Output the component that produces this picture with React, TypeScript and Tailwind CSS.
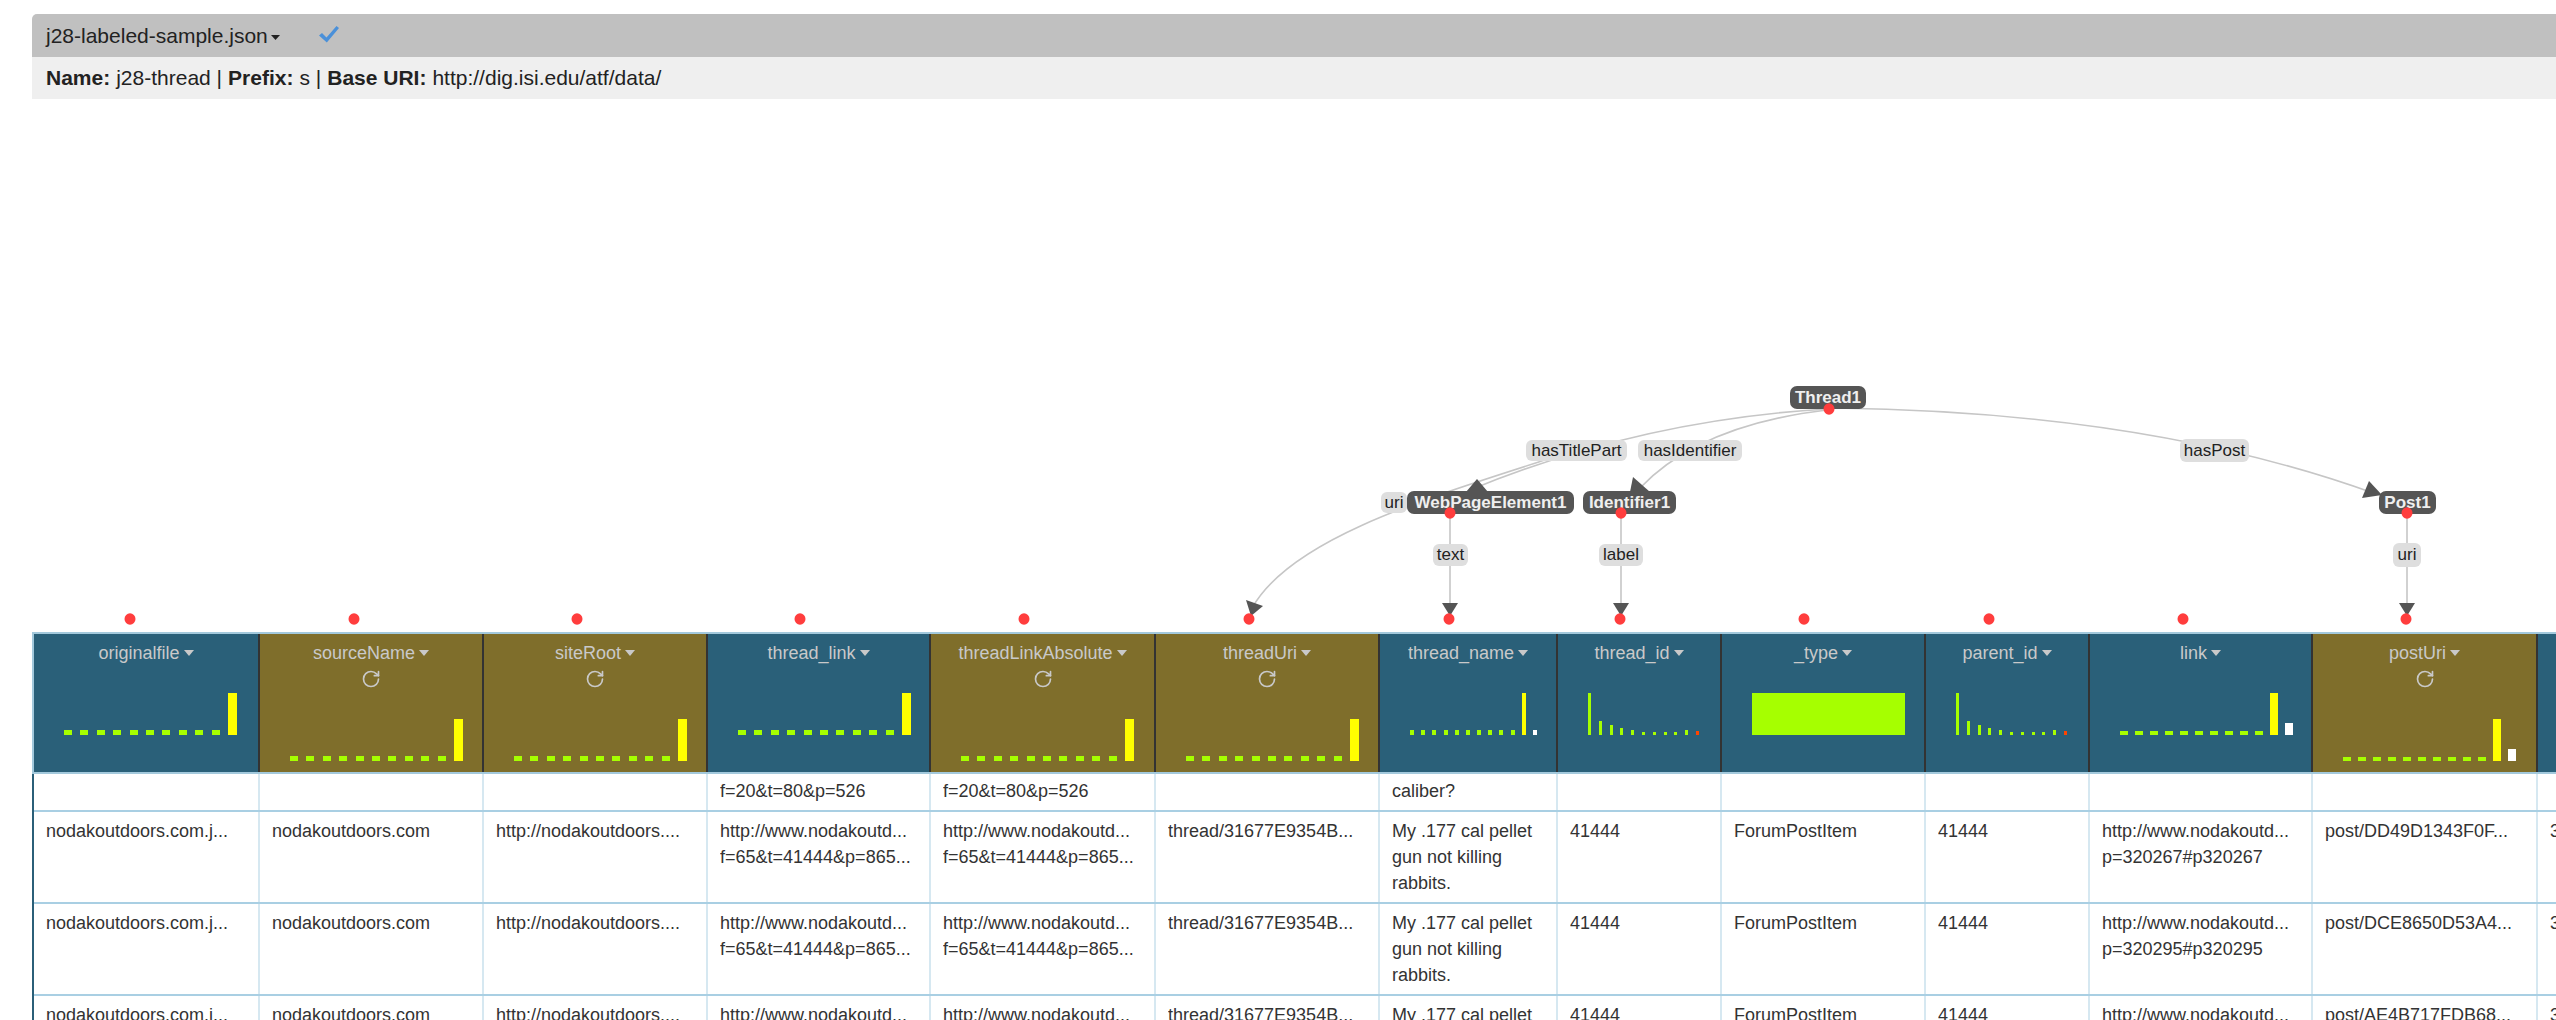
import React from 'react';
import { RotateCw } from 'lucide-react';

type Bar = { w: number; h: number; c: string };
const G = '#a6ff00';
const Y = '#ffff00';
const WH = '#ffffff';
const RD = '#ff4500';
const rep = (n: number, b: Bar): Bar[] => Array.from({ length: n }, () => b);

const CHARTS: Record<string, { cw: number; bars: Bar[] }> = {
  A: { cw: 173, bars: [...rep(10, { w: 8, h: 5, c: G }), { w: 9, h: 42, c: Y }] },
  B: { cw: 127, bars: [...rep(10, { w: 4, h: 5, c: G }), { w: 4, h: 42, c: Y }, { w: 4, h: 5, c: WH }] },
  C: {
    cw: 111,
    bars: [...[42, 14, 10, 7, 5, 3, 3, 3, 3, 5].map((h) => ({ w: 3, h, c: G })), { w: 3, h: 4, c: RD }],
  },
  D: { cw: 153, bars: [{ w: 153, h: 42, c: G }] },
  E: { cw: 173, bars: [...rep(10, { w: 8, h: 4, c: G }), { w: 8, h: 42, c: Y }, { w: 8, h: 12, c: WH }] },
};

type Col = { name: string; w: string; olive: boolean; chart: string | null };
const COLS: Col[] = [
  { name: 'originalfile', w: 'w-[226px]', olive: false, chart: 'A' },
  { name: 'sourceName', w: 'w-[224px]', olive: true, chart: 'A' },
  { name: 'siteRoot', w: 'w-[224px]', olive: true, chart: 'A' },
  { name: 'thread_link', w: 'w-[223px]', olive: false, chart: 'A' },
  { name: 'threadLinkAbsolute', w: 'w-[225px]', olive: true, chart: 'A' },
  { name: 'threadUri', w: 'w-[224px]', olive: true, chart: 'A' },
  { name: 'thread_name', w: 'w-[178px]', olive: false, chart: 'B' },
  { name: 'thread_id', w: 'w-[164px]', olive: false, chart: 'C' },
  { name: '_type', w: 'w-[204px]', olive: false, chart: 'D' },
  { name: 'parent_id', w: 'w-[164px]', olive: false, chart: 'C' },
  { name: 'link', w: 'w-[223px]', olive: false, chart: 'E' },
  { name: 'postUri', w: 'w-[225px]', olive: true, chart: 'E' },
  { name: '', w: 'w-[220px]', olive: false, chart: null },
];

const ROW_A: string[][] = [
  [], [], [], ['f=20&t=80&p=526'], ['f=20&t=80&p=526'], [], ['caliber?'], [], [], [], [], [], [],
];

const fullRow = (link2: string, post: string): string[][] => [
  ['nodakoutdoors.com.j...'],
  ['nodakoutdoors.com'],
  ['http://nodakoutdoors....'],
  ['http://www.nodakoutd...', 'f=65&t=41444&p=865...'],
  ['http://www.nodakoutd...', 'f=65&t=41444&p=865...'],
  ['thread/31677E9354B...'],
  ['My .177 cal pellet', 'gun not killing', 'rabbits.'],
  ['41444'],
  ['ForumPostItem'],
  ['41444'],
  ['http://www.nodakoutd...', link2],
  [post],
  ['3'],
];

function Caret({ color }: { color: string }) {
  return (
    <svg width="10" height="6" viewBox="0 0 10 6" className="ml-[4px] shrink-0">
      <polygon points="0,0 10,0 5,6" fill={color} />
    </svg>
  );
}

function HeaderCell({ col }: { col: Col }) {
  const chart = col.chart ? CHARTS[col.chart] : null;
  return (
    <div
      className={`${col.w} shrink-0 h-full border-r-2 border-[#333333] pt-[6px] ${
        col.olive ? 'bg-[#7f6e2b]' : 'bg-[#2a6079]'
      }`}
    >
      {col.name && (
        <div className="h-[26px] flex items-center justify-center text-[18px] text-[#c9c9c9]">
          <span>{col.name}</span>
          <Caret color="#c9c9c9" />
        </div>
      )}
      {col.olive && (
        <div className="h-[26px] flex items-center justify-center">
          <RotateCw size={20} strokeWidth={2} color="#c9c9c9" />
        </div>
      )}
      {chart && (
        <>
          <div className="h-[27px]" />
          <div className="pl-[30px]">
            <div className="h-[42px] flex items-end justify-between" style={{ width: chart.cw }}>
              {chart.bars.map((b, i) => (
                <div key={i} style={{ width: b.w, height: b.h, background: b.c }} />
              ))}
            </div>
          </div>
        </>
      )}
    </div>
  );
}

function Row({ cells, h, pt }: { cells: string[][]; h: string; pt: string }) {
  return (
    <div className={`flex ${h} border-b-2 border-[#a9cfe3]`}>
      {COLS.map((c, i) => (
        <div
          key={i}
          className={`${c.w} shrink-0 h-full border-r-2 border-[#d6e8f1] px-[12px] ${pt} overflow-hidden text-[18px] text-[#333333]`}
        >
          {cells[i].map((l, j) => (
            <div key={j} className="whitespace-nowrap overflow-hidden leading-[26px]">
              {l}
            </div>
          ))}
        </div>
      ))}
    </div>
  );
}

function Graph() {
  const colDots = [130, 354, 577, 800, 1024, 1249, 1449, 1620, 1804, 1989, 2183, 2406];
  const nodeDots: [number, number][] = [
    [1829, 409],
    [1450, 513],
    [1621, 513],
    [2407, 513],
  ];
  const stroke = '#c6c6c6';
  return (
    <>
      <svg className="absolute left-0 top-0 pointer-events-none" width="2556" height="640">
        <g fill="none" stroke={stroke} strokeWidth="1.6">
          <path d="M 1827 409 Q 1640 420 1470 490" />
          <path d="M 1545 460 C 1420 500 1290 540 1252 608" />
          <path d="M 1827 410 Q 1700 425 1640 488" />
          <path d="M 1835 408 Q 2150 412 2376 494" />
          <path d="M 1450 513 L 1450 604" />
          <path d="M 1621 513 L 1621 604" />
          <path d="M 2407 513 L 2407 604" />
        </g>
      </svg>

      {/* nodes */}
      <div className="absolute left-[1790px] top-[386px] w-[76px] h-[23px] rounded-[7px] bg-[#555555] flex items-center justify-center text-[17px] font-bold text-[#efefef] whitespace-nowrap">
        Thread1
      </div>
      <div className="absolute left-[1407px] top-[491px] w-[167px] h-[23px] rounded-[7px] bg-[#555555] flex items-center justify-center text-[17px] font-bold text-[#efefef] whitespace-nowrap">
        WebPageElement1
      </div>
      <div className="absolute left-[1583px] top-[491px] w-[93px] h-[23px] rounded-[7px] bg-[#555555] flex items-center justify-center text-[17px] font-bold text-[#efefef] whitespace-nowrap">
        Identifier1
      </div>
      <div className="absolute left-[2379px] top-[491px] w-[57px] h-[23px] rounded-[7px] bg-[#555555] flex items-center justify-center text-[17px] font-bold text-[#efefef] whitespace-nowrap">
        Post1
      </div>

      {/* edge labels */}
      <div className="absolute left-[1526px] top-[440px] w-[101px] h-[21px] rounded-[6px] bg-[#dedede] flex items-center justify-center text-[17px] text-[#222222] whitespace-nowrap">
        hasTitlePart
      </div>
      <div className="absolute left-[1638px] top-[440px] w-[104px] h-[21px] rounded-[6px] bg-[#dedede] flex items-center justify-center text-[17px] text-[#222222] whitespace-nowrap">
        hasIdentifier
      </div>
      <div className="absolute left-[2180px] top-[439px] w-[69px] h-[23px] rounded-[6px] bg-[#dedede] flex items-center justify-center text-[17px] text-[#222222] whitespace-nowrap">
        hasPost
      </div>
      <div className="absolute left-[1381px] top-[492px] w-[26px] h-[21px] rounded-[6px] bg-[#dedede] flex items-center justify-center text-[17px] text-[#222222] whitespace-nowrap">
        uri
      </div>
      <div className="absolute left-[1433px] top-[544px] w-[35px] h-[22px] rounded-[6px] bg-[#dedede] flex items-center justify-center text-[17px] text-[#222222] whitespace-nowrap">
        text
      </div>
      <div className="absolute left-[1599px] top-[544px] w-[44px] h-[22px] rounded-[6px] bg-[#dedede] flex items-center justify-center text-[17px] text-[#222222] whitespace-nowrap">
        label
      </div>
      <div className="absolute left-[2393px] top-[543px] w-[28px] h-[24px] rounded-[6px] bg-[#dedede] flex items-center justify-center text-[17px] text-[#222222] whitespace-nowrap">
        uri
      </div>

      <svg className="absolute left-0 top-0 pointer-events-none" width="2556" height="640">
        <g fill="#555555">
          <polygon points="1466,492 1477,479 1488,492" />
          <polygon points="1633,477 1650,492 1630,492" />
          <polygon points="2369,481 2382,495 2362,498" />
          <polygon points="1246,600 1263,606 1251,616" />
          <polygon points="1442,603 1458,603 1450,616" />
          <polygon points="1613,603 1629,603 1621,616" />
          <polygon points="2399,603 2415,603 2407,616" />
        </g>
        <g fill="#ff3d3d">
          {colDots.map((x, i) => (
            <ellipse key={i} cx={x} cy={619} rx={5.5} ry={5.8} />
          ))}
          {nodeDots.map(([x, y], i) => (
            <ellipse key={'n' + i} cx={x} cy={y} rx={5.5} ry={5.8} />
          ))}
        </g>
      </svg>
    </>
  );
}

export default function App() {
  return (
    <div className="relative w-[2556px] h-[1020px] overflow-hidden bg-white font-['Liberation_Sans',Arial,sans-serif]">
      <div className="pl-[32px] pt-[14px]">
        {/* top bar */}
        <div className="h-[43px] rounded-tl-[5px] bg-[#c0c0c0] flex items-center pl-[14px] text-[21px] text-[#222222]">
          <span>j28-labeled-sample.json</span>
          <svg width="9" height="5" viewBox="0 0 9 5" className="ml-[3px] mt-[3px]">
            <polygon points="0,0 9,0 4.5,5" fill="#222222" />
          </svg>
          <svg width="22" height="19" viewBox="0 0 22 19" className="ml-[38px] mb-[2px]">
            <path d="M1 10.5 L4 8 L8.5 12.5 L18.5 1 L21 3 L8.8 17.5 Z" fill="#4a90d9" />
          </svg>
        </div>
        <div className="h-[42px] bg-[#efefef] flex items-center pl-[14px] text-[21px] text-[#222222] whitespace-nowrap">
          <b>Name:</b>
          <span className="ml-[6px]">j28-thread | </span>
          <b className="ml-[6px]">Prefix:</b>
          <span className="ml-[6px]">s | </span>
          <b className="ml-[6px]">Base URI:</b>
          <span className="ml-[6px]">http://dig.isi.edu/atf/data/</span>
        </div>

        {/* graph canvas spacer */}
        <div className="h-[533px]" />

        {/* table */}
        <div className="flex h-[142px] border-t-2 border-b-2 border-l-2 border-[#a3c9dc]">
          {COLS.map((c, i) => (
            <HeaderCell key={i} col={c} />
          ))}
        </div>
        <div className="border-l-2 border-[#2b5f78]">
          <Row cells={ROW_A} h="h-[38px]" pt="pt-[4px]" />
          <Row cells={fullRow('p=320267#p320267', 'post/DD49D1343F0F...')} h="h-[92px]" pt="pt-[6px]" />
          <Row cells={fullRow('p=320295#p320295', 'post/DCE8650D53A4...')} h="h-[92px]" pt="pt-[6px]" />
          <Row cells={fullRow('p=320313#p320313', 'post/AE4B717FDB68...')} h="h-[92px]" pt="pt-[6px]" />
        </div>
      </div>
      <Graph />
    </div>
  );
}
